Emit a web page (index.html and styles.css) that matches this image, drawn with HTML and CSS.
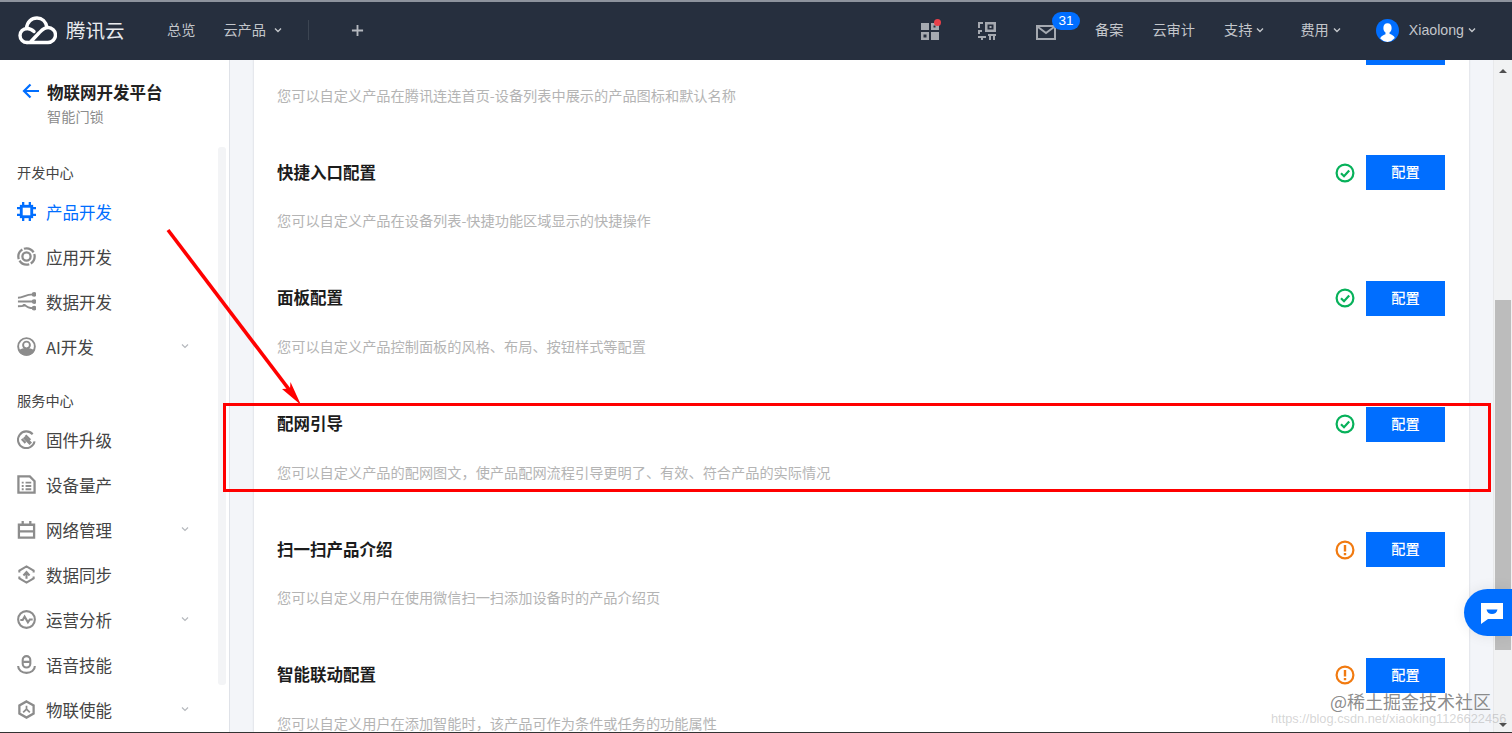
FILE: index.html
```html
<!DOCTYPE html>
<html lang="zh-CN">
<head>
<meta charset="utf-8">
<title>物联网开发平台</title>
<link rel="stylesheet" href="styles.css">
</head>
<body>
<div class="app">
  <header class="topbar">
    <div class="brand">
      <svg class="logo" viewBox="0 0 40 30" fill="none" stroke="#fff" stroke-width="3.4" stroke-linecap="round" stroke-linejoin="round"><path d="M10 27.500H31A7.500 7.500 0 0 0 31 12.500C27 12.500 25 15 22 18L13.500 27"/><path d="M10 27.500A7 7 0 0 1 10 13.500C13 13.500 15 14.500 17 16.500"/><path d="M9.500 13.500C10 7 14.500 3 20 3C25 3 29 6.500 30 12.500"/></svg>
      <span class="brand-name">腾讯云</span>
    </div>
    <nav class="nav-left">
      <a class="nav-link">总览</a>
      <a class="nav-link nav-products">云产品<svg class="chev" viewBox="0 0 8 6"><path d="M1 1.500L4 4.500L7 1.500"/></svg></a>
      <span class="nav-divider"></span>
      <svg class="plus" viewBox="0 0 14 14"><path d="M7 1V13M1 7H13"/></svg>
    </nav>
    <div class="nav-right">
      <span class="tool tool-apps">
        <svg viewBox="0 0 18 18" class="tool-icon" fill-rule="evenodd"><path fill="#a5a9b0" d="M0 1h8v7H0zM10 1h8v7h-8zM12.500 3.500v2h2v-2zM0 10h8v8H0zM2.500 12.500v3h3v-3zM10 10h8v8h-8z"/></svg>
        <i class="red-dot"></i>
      </span>
      <svg viewBox="0 0 18 18" class="tool-icon tool-qr" fill="#a5a9b0" fill-rule="evenodd"><path d="M0 0h5v2H2v4H0zM7 0h11v10H7zM9.500 2.500v5h6v-5zM11.500 4h2v2h-2zM0 8h4v2H2v2H0zM0 14h8v2H5v2H3v-2H0zM10 12h8v2h-1v4h-2v-4h-2v4h-2v-4h-1z"/></svg>
      <span class="tool tool-mail">
        <svg viewBox="0 0 20 15" class="mail-icon" fill="none" stroke="#a5a9b0" stroke-width="2"><path d="M1 1h18v13H1zM2 2l8 6 8-6"/></svg>
        <b class="badge">31</b>
      </span>
      <a class="nav-link link-beian">备案</a>
      <a class="nav-link link-audit">云审计</a>
      <a class="nav-link link-support">支持<svg class="chev" viewBox="0 0 8 6"><path d="M1 1.500L4 4.500L7 1.500"/></svg></a>
      <a class="nav-link link-fee">费用<svg class="chev" viewBox="0 0 8 6"><path d="M1 1.500L4 4.500L7 1.500"/></svg></a>
      <span class="user">
        <svg class="avatar" viewBox="0 0 24 24"><circle cx="12" cy="12" r="12" fill="#006eff"/><path fill="#fff" d="M12 4.500c2.800 0 4.300 2.200 4.300 4.800 0 2-.9 3.800-2.200 4.800v1.400c2.500 1 5 2.100 5.500 4.300A12 12 0 0 1 12 24a12 12 0 0 1-7.600-3.700c.5-2.200 3-3.300 5.500-4.300v-1.900c-1.300-1-2.200-2.800-2.200-4.800 0-2.600 1.500-4.800 4.300-4.800z"/></svg>
        <span class="user-name">Xiaolong</span>
        <svg class="chev" viewBox="0 0 8 6"><path d="M1 1.500L4 4.500L7 1.500"/></svg>
      </span>
    </div>
  </header>

  <div class="body">
    <aside class="sidebar">
      <div class="side-head">
        <svg class="back" viewBox="0 0 18 16" fill="none" stroke="#006eff" stroke-width="2.200"><path d="M17 8H2M8.500 1.500L2 8L8.500 14.500"/></svg>
        <div>
          <div class="side-title">物联网开发平台</div>
          <div class="side-sub">智能门锁</div>
        </div>
      </div>
      <div class="side-scroll">
        <div class="side-group">开发中心</div>
        <div class="side-item active">
          <svg class="side-icon" viewBox="0 0 20 20" fill="none" stroke="#006eff" stroke-width="3"><rect x="4.500" y="4.500" width="11" height="11"/><path stroke-width="2.400" d="M6.500 0v4M13.500 0v4M6.500 16v4M13.500 16v4M0 6.500h4M0 13.500h4M16 6.500h4M16 13.500h4"/></svg>
          <span>产品开发</span>
        </div>
        <div class="side-item">
          <svg class="side-icon" viewBox="0 0 20 20" fill="none" stroke="#8c8c8c" stroke-width="2.400"><circle cx="10" cy="10" r="4.300"/><circle cx="10" cy="10" r="8.600" stroke-dasharray="11.700 1.800" stroke-dashoffset="3"/></svg>
          <span>应用开发</span>
        </div>
        <div class="side-item">
          <svg class="side-icon" viewBox="0 0 20 20" fill="none" stroke="#8c8c8c" stroke-width="2"><path d="M1 6c6 0 7-3.500 16-3.500M1 10c5 0 7 0 16 0M1 15c7 0 8-1.500 7-1.500c3 3 5 3.500 9 3.500"/><circle cx="18" cy="2.500" r="1.500" fill="#8c8c8c"/><circle cx="18" cy="10" r="1.500" fill="#8c8c8c"/><circle cx="18" cy="17" r="1.500" fill="#8c8c8c"/></svg>
          <span>数据开发</span>
        </div>
        <div class="side-item">
          <svg class="side-icon" viewBox="0 0 20 20" fill="none" stroke="#8c8c8c" stroke-width="2"><circle cx="10" cy="10" r="8.800"/><circle cx="10" cy="8.500" r="3.600"/><path fill="#8c8c8c" d="M2.500 14.500c4-2.500 11-2.500 15 0-3 5.500-12 5.500-15 0z"/></svg>
          <span>AI开发</span>
          <svg class="side-chev" viewBox="0 0 8 6"><path d="M1 1.500L4 4.500L7 1.500"/></svg>
        </div>
        <div class="side-group group-service">服务中心</div>
        <div class="side-item">
          <svg class="side-icon" viewBox="0 0 20 20" fill="none" stroke="#8c8c8c" stroke-width="2.200"><path d="M16.500 4.500A8.800 8.800 0 1 0 18.500 12"/><path stroke-width="3.600" d="M7.500 7.500L14.500 14.500"/><path stroke-width="2.400" d="M9 5.500l5 5M5 9.500l4 4"/></svg>
          <span>固件升级</span>
        </div>
        <div class="side-item">
          <svg class="side-icon" viewBox="0 0 20 20" fill="none" stroke="#8c8c8c" stroke-width="2.400"><path d="M1.500 1.500h12l5 5v12h-17z"/><path stroke-width="2" d="M5 8h2M9 8h6M5 11.500h2M9 11.500h6M5 15h2M9 15h6"/></svg>
          <span>设备量产</span>
        </div>
        <div class="side-item">
          <svg class="side-icon" viewBox="0 0 20 20" fill="none" stroke="#8c8c8c" stroke-width="2.400"><path d="M2 5h16v13.500H2zM2 12h16M6 1v4M14 1v4"/></svg>
          <span>网络管理</span>
          <svg class="side-chev" viewBox="0 0 8 6"><path d="M1 1.500L4 4.500L7 1.500"/></svg>
        </div>
        <div class="side-item">
          <svg class="side-icon" viewBox="0 0 20 20" fill="none" stroke="#8c8c8c" stroke-width="2.200"><path d="M2.500 8V6L10 1.500L17.500 6V8M2.500 12v2L10 18.500L17.500 14v-2M10 14.500V8M6.800 11L10 7.500l3.200 3.500"/></svg>
          <span>数据同步</span>
        </div>
        <div class="side-item">
          <svg class="side-icon" viewBox="0 0 20 20" fill="none" stroke="#8c8c8c" stroke-width="2.200"><circle cx="10" cy="10" r="8.800"/><path d="M3.500 10.500H6L8 7l3.500 6 2-3h3"/></svg>
          <span>运营分析</span>
          <svg class="side-chev" viewBox="0 0 8 6"><path d="M1 1.500L4 4.500L7 1.500"/></svg>
        </div>
        <div class="side-item">
          <svg class="side-icon" viewBox="0 0 20 20" fill="none" stroke="#8c8c8c" stroke-width="2.200"><rect x="6" y="1.200" width="8" height="12" rx="4"/><path d="M6.500 7.200h7M1.200 11.500c0 4.500 4 7.300 8.800 7.300s8.800-2.800 8.800-7.300"/></svg>
          <span>语音技能</span>
        </div>
        <div class="side-item">
          <svg class="side-icon" viewBox="0 0 20 20" fill="none" stroke="#8c8c8c" stroke-width="2.400"><path d="M10 1.500l7.500 4.300v8.400L10 18.500l-7.500-4.300V5.800z"/><path stroke-width="1.800" d="M10 6v3.500L6.500 13M10 9.500l3.500 3.500"/></svg>
          <span>物联使能</span>
          <svg class="side-chev" viewBox="0 0 8 6"><path d="M1 1.500L4 4.500L7 1.500"/></svg>
        </div>
      </div>
      <span class="side-track"></span>
    </aside>

    <main class="main">
      <section class="card">
        <div class="row">
          <div class="row-head row-end">
            <button class="btn" aria-label="配置"></button>
          </div>
          <p>您可以自定义产品在腾讯连连首页-设备列表中展示的产品图标和默认名称</p>
        </div>
        <div class="row">
          <div class="row-head">
            <h3>快捷入口配置</h3>
            <svg class="status" viewBox="0 0 20 20"><use href="#ok"/></svg>
            <button class="btn">配置</button>
          </div>
          <p>您可以自定义产品在设备列表-快捷功能区域显示的快捷操作</p>
        </div>
        <div class="row">
          <div class="row-head">
            <h3>面板配置</h3>
            <svg class="status" viewBox="0 0 20 20"><use href="#ok"/></svg>
            <button class="btn">配置</button>
          </div>
          <p>您可以自定义产品控制面板的风格、布局、按钮样式等配置</p>
        </div>
        <div class="row">
          <div class="row-head">
            <h3>配网引导</h3>
            <svg class="status" viewBox="0 0 20 20"><use href="#ok"/></svg>
            <button class="btn">配置</button>
          </div>
          <p>您可以自定义产品的配网图文，使产品配网流程引导更明了、有效、符合产品的实际情况</p>
        </div>
        <div class="row">
          <div class="row-head">
            <h3>扫一扫产品介绍</h3>
            <svg class="status" viewBox="0 0 20 20"><use href="#warn"/></svg>
            <button class="btn">配置</button>
          </div>
          <p>您可以自定义用户在使用微信扫一扫添加设备时的产品介绍页</p>
        </div>
        <div class="row">
          <div class="row-head">
            <h3>智能联动配置</h3>
            <svg class="status" viewBox="0 0 20 20"><use href="#warn"/></svg>
            <button class="btn">配置</button>
          </div>
          <p class="row-last">您可以自定义用户在添加智能时，该产品可作为条件或任务的功能属性</p>
        </div>
      </section>
      <div class="scrollbar">
        <span class="arrow-up"></span>
        <span class="thumb"></span>
        <span class="arrow-down"></span>
      </div>
    </main>
  </div>
</div>

<svg class="defs" aria-hidden="true">
  <symbol id="ok" viewBox="0 0 20 20"><circle cx="10" cy="10" r="8.400" fill="none" stroke="#07b15a" stroke-width="2.200"/><path d="M6 10.200l3 3 5.200-5.800" fill="none" stroke="#07b15a" stroke-width="2.200"/></symbol>
  <symbol id="warn" viewBox="0 0 20 20"><circle cx="10" cy="10" r="8.400" fill="none" stroke="#f17a10" stroke-width="2.200"/><path d="M10 5v6.500M10 13v2.200" fill="none" stroke="#f17a10" stroke-width="2.400"/></symbol>
</svg>

<button class="chat" aria-label="chat">
  <svg viewBox="0 0 22 22"><path fill="#fff" d="M0 1h22v16H7l-7 5z"/><path fill="#006eff" d="M5.500 7.500h11c-.6 3-2.800 4.500-5.500 4.500s-4.900-1.500-5.500-4.500z"/></svg>
</button>

<div class="mark-box"></div>
<svg class="mark-arrow" viewBox="0 0 150 190"><path d="M2 2L128 168" fill="none" stroke="#f00" stroke-width="3.600"/><path fill="#f00" d="M135 177L116 161L124 160.500L124.500 154z"/></svg>
<div class="wm wm-main">@稀土掘金技术社区</div>
<div class="wm wm-sub">https://blog.csdn.net/xiaoking1126622456</div>
</body>
</html>
```
FILE: styles.css
```css
* { box-sizing: border-box; }
html, body { margin: 0; height: 100%; overflow: hidden; }
body {
  position: relative;
  font-family: "Noto Sans CJK SC", "Liberation Sans", sans-serif;
  background: #fff;
  color: #333;
}
.app { display: flex; flex-direction: column; height: 733px; border-bottom: 1px solid #333; }

/* top bar */
.topbar {
  flex: 0 0 60px;
  display: flex;
  align-items: center;
  background: #262f3e;
  box-shadow: inset 0 2px 0 #8d939d;
  color: #c3c6cb;
  font-size: 14.200px;
}
.brand { display: flex; align-items: center; margin-left: 17px; width: 150px; }
.logo { width: 40px; height: 30px; }
.brand-name { margin-left: 9px; font-size: 19.500px; color: #e9ebee; line-height: 1; }
.nav-left { display: flex; align-items: center; }
.nav-link { display: inline-flex; align-items: center; white-space: nowrap; line-height: 20px; padding-bottom: 2px; }
.nav-link .chev { margin-top: 2px; }
.nav-products { margin-left: 28px; }
.chev { width: 8px; height: 6px; margin-left: 8px; fill: none; stroke: #c3c6cb; stroke-width: 1.400; }
.nav-divider { width: 1px; height: 20px; background: #3c4552; margin-left: 26px; }
.plus { width: 13px; height: 13px; margin-left: 42px; fill: none; stroke: #b5b9bf; stroke-width: 2; }
.nav-right { margin-left: auto; display: flex; align-items: center; padding-right: 36px; }
.tool { position: relative; display: block; }
.tool-icon { display: block; width: 18px; height: 18px; }
.tool-apps { margin-top: 2px; }
.tool-qr { margin: 2px 0 0 39px; }
.red-dot { position: absolute; top: -3px; right: -2px; width: 7px; height: 7px; border-radius: 50%; background: #e8404a; }
.tool-mail { margin: 5px 0 0 40px; }
.mail-icon { display: block; width: 20px; height: 15px; }
.badge {
  position: absolute; left: 16px; top: -13px;
  width: 28px; height: 18px; border-radius: 9px;
  background: #006eff; color: #fff;
  font: 400 13.500px/18px "Liberation Sans", sans-serif;
  text-align: center;
}
.link-beian { margin-left: 39px; }
.link-audit { margin-left: 29px; }
.link-support { margin-left: 29px; }
.link-fee { margin-left: 36px; }
.link-support .chev, .link-fee .chev { margin-left: 4px; }
.user { display: flex; align-items: center; margin-left: 35px; }
.avatar { width: 23px; height: 23px; }
.user-name { margin-left: 10px; font: 14.200px/20px "Liberation Sans", sans-serif; color: #c3c6cb; }
.user .chev { margin-left: 4px; }

/* body */
.body { flex: 1; display: flex; min-height: 0; }
.sidebar { position: relative; flex: 0 0 230px; border-right: 1px solid #dfe2e8; background: #fff; overflow: hidden; }
.side-head { display: flex; padding: 20px 0 0 22px; height: 92px; }
.back { width: 18px; height: 16px; margin: 3px 7px 0 0; flex: none; }
.side-title { font-size: 16.500px; font-weight: 700; color: #222; line-height: 24px; }
.side-sub { font-size: 14.200px; color: #8c8c8c; line-height: 24px; }
.side-scroll { padding-left: 17px; }
.side-group { font-size: 14.200px; color: #444; line-height: 20px; margin-top: 10px; height: 27px; }
.group-service { margin-top: 21px; height: 27px; }
.side-item { position: relative; display: flex; align-items: center; height: 45px; font-size: 16.500px; color: #444; }
.side-item span { margin-left: 10px; line-height: 24px; }
.side-icon { width: 19px; height: 19px; flex: none; }
.side-item.active { color: #006eff; }
.side-chev { position: absolute; left: 164px; top: 19px; width: 8px; height: 6px; fill: none; stroke: #b5b8bd; stroke-width: 1.200; }
.side-track { position: absolute; left: 218px; top: 87px; width: 8px; height: 538px; background: #f3f4f6; border-radius: 3px; }

/* main */
.main { flex: 1; display: flex; min-width: 0; background: #f3f5f9; overflow: hidden; }
.card {
  flex: 0 0 1215px;
  margin-left: 24px;
  background: #fff;
  padding: 0 24px 0 23px;
  box-shadow: 0 0 2px #c9ccd3;
  display: grid;
  grid-auto-rows: 125.670px;
  margin-top: -30.400px;
}
.row-head { display: flex; align-items: center; height: 35px; }
.row-end { justify-content: flex-end; }
.row-head h3 { margin: 0 auto 2px 0; font-size: 16.500px; font-weight: 700; color: #1c1c1c; line-height: 24px; }
.status { width: 20px; height: 20px; margin-right: 11px; }
.btn {
  width: 79px; height: 35px; border: 0; padding: 0 0 2px;
  background: #006eff; color: #fff;
  font: 500 14.200px/33px "Noto Sans CJK SC", sans-serif;
}
.row p { margin: 20px 0 0; font-size: 14.200px; line-height: 20px; color: #b4b4b4; white-space: nowrap; }
.row p.row-last { line-height: 18px; margin-top: 21px; }
.scrollbar {
  position: relative;
  width: 19px;
  margin-left: auto;
  background: #f1f2f3;
  border-left: 1px solid #e8e9eb;
}
.thumb { position: absolute; left: 1px; top: 240px; width: 16px; height: 350px; background: #bcbcbc; }
.arrow-up, .arrow-down { position: absolute; left: 5px; width: 0; height: 0; border: 4px solid transparent; }
.arrow-up { top: 5px; border-bottom-color: #505050; }
.arrow-down { bottom: 1px; border-top-color: #505050; }

/* overlays */
.defs { position: absolute; width: 0; height: 0; }
.chat {
  position: absolute; left: 1464px; top: 589px;
  width: 48px; height: 47px; padding: 0; border: 0;
  border-radius: 24px 0 0 24px;
  background: #006eff;
  box-shadow: 0 0 14px rgba(0, 0, 0, .08);
  display: flex; align-items: center; justify-content: center;
}
.chat svg { width: 22px; height: 22px; margin-left: 8px; }
.mark-box { position: absolute; left: 223px; top: 403px; width: 1268px; height: 89px; border: 3px solid #f00; }
.mark-arrow { position: absolute; left: 166px; top: 228px; width: 150px; height: 190px; }
.wm { position: absolute; white-space: nowrap; }
.wm-main { left: 1330px; top: 691px; font-size: 18px; line-height: 20px; color: rgba(110, 110, 110, .8); }
.wm-sub { left: 1271px; top: 712px; font: 12.800px/14px "Liberation Sans", sans-serif; color: rgba(150, 150, 150, .4); }
```
